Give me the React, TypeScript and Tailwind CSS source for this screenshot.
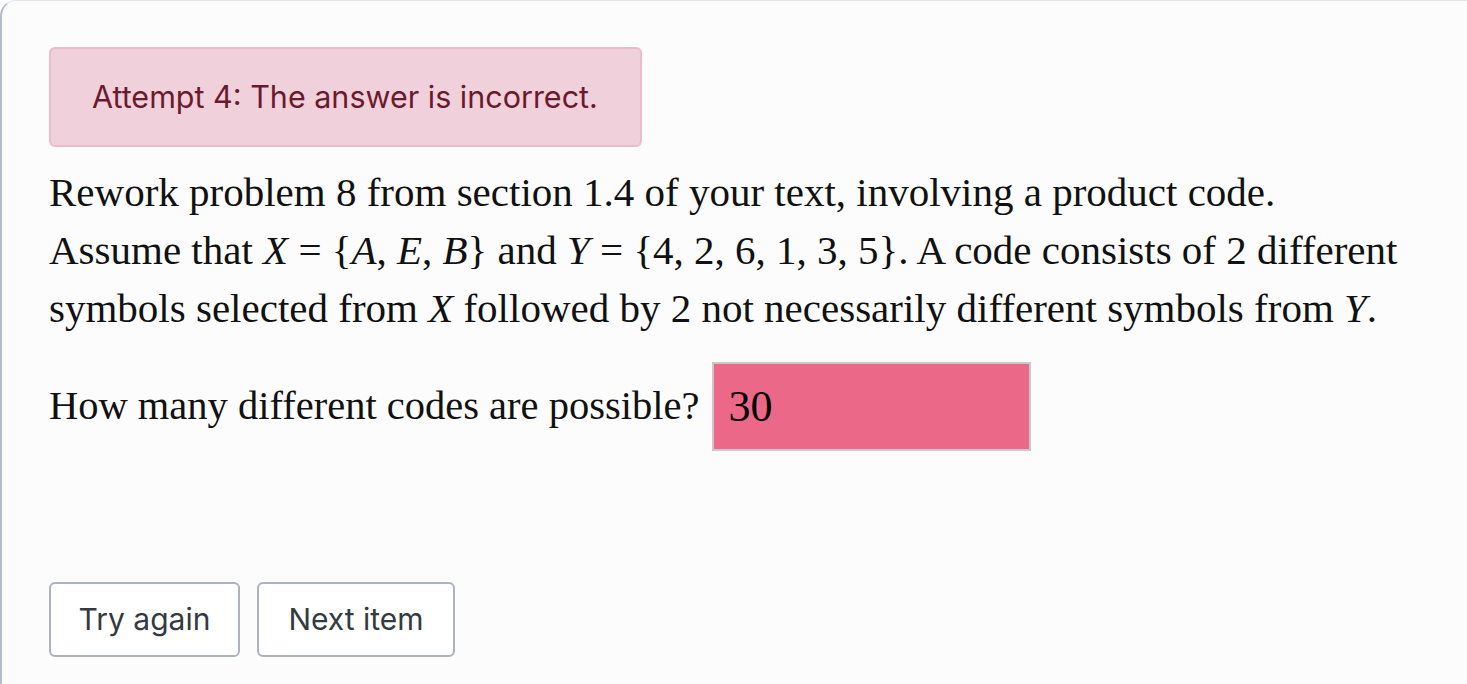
const serif = "font-['Liberation_Serif',serif]";

function V({ children }: { children: React.ReactNode }) {
  return <span className="italic">{children}</span>;
}

export default function App() {
  return (
    <div className="min-h-[684px] bg-[#fcfcfc]">
      <div className="min-h-[684px] rounded-tl-[16px] border-l-2 border-t border-l-[#b4bccb] border-t-[#e4e6ea] pl-[47px] pt-[46px]">
        <div className="flex h-[100px] w-[593px] items-center rounded-[6px] border-2 border-[#ebbccb] bg-[#f0d0da] pl-[41px] font-['Inter',sans-serif] text-[30.5px] text-[#6b1a2e]">
          Attempt 4: The answer is incorrect.
        </div>

        <p className={`${serif} mt-[16px] text-[41px] leading-[58px] text-[#111]`}>
          Rework problem 8 from section 1.4 of your text, involving a product code.
          <br />
          Assume that <V>X</V> = {"{"}<V>A</V>, <V>E</V>, <V>B</V>{"}"} and <V>Y</V> = {"{"}4, 2, 6, 1, 3, 5{"}"}. A code consists of 2 different
          <br />
          symbols selected from <V>X</V> followed by 2 not necessarily different symbols from <V>Y</V>.
        </p>

        <div className={`${serif} mt-[25px] flex items-center gap-[13px] text-[40.5px] text-[#111]`}>
          <span>How many different codes are possible?</span>
          <div className="flex h-[89px] w-[319px] items-center border-2 border-[#c9c9c9] bg-[#ec6888] pl-[14px] text-[44px] text-black">
            30
          </div>
        </div>

        <div className="mt-[131px] flex gap-[17px] font-['Inter',sans-serif] text-[30px] text-[#343a40]">
          <button className="h-[75px] w-[191px] rounded-[6px] border-2 border-[#adb3bc] bg-white">Try again</button>
          <button className="h-[75px] w-[198px] rounded-[6px] border-2 border-[#adb3bc] bg-white">Next item</button>
        </div>
      </div>
    </div>
  );
}
